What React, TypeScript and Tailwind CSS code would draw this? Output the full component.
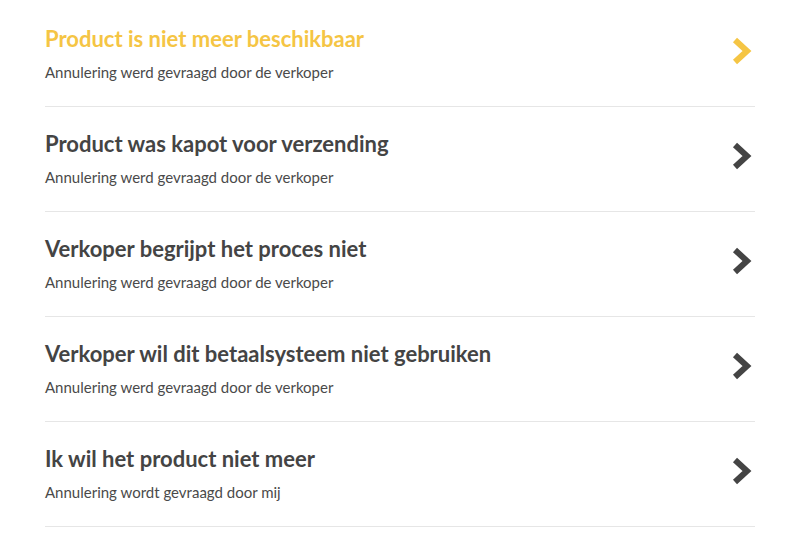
import React from 'react';

const reasons = [
  { title: 'Product is niet meer beschikbaar', sub: 'Annulering werd gevraagd door de verkoper', active: true },
  { title: 'Product was kapot voor verzending', sub: 'Annulering werd gevraagd door de verkoper' },
  { title: 'Verkoper begrijpt het proces niet', sub: 'Annulering werd gevraagd door de verkoper' },
  { title: 'Verkoper wil dit betaalsysteem niet gebruiken', sub: 'Annulering werd gevraagd door de verkoper' },
  { title: 'Ik wil het product niet meer', sub: 'Annulering wordt gevraagd door mij' },
];

const Chevron = ({ color }: { color: string }) => (
  <svg width="22" height="30" viewBox="0 0 22 30" fill="none">
    <polyline points="4,4 16,15 4,26" stroke={color} strokeWidth="6" strokeLinejoin="miter" />
  </svg>
);

export default function App() {
  return (
    <div className="w-[800px] h-[543px] bg-white px-[45px] pt-[2px] font-['Lato',sans-serif] overflow-hidden">
      {reasons.map((r) => (
        <div key={r.title} className="flex items-center justify-between h-[105px] border-b border-[#e6e6e6] cursor-pointer">
          <div className="flex flex-col self-start pt-[23px]">
            <div className={`text-[22px] leading-[28px] font-bold ${r.active ? 'text-[#f5c544]' : 'text-[#444444]'}`}>
              {r.title}
            </div>
            <div className="mt-[9px] text-[15px] leading-[20px] text-[#4a4a4a]">{r.sub}</div>
          </div>
          <div className="mr-[2px] mb-[6px]">
            <Chevron color={r.active ? '#f5c544' : '#444444'} />
          </div>
        </div>
      ))}
    </div>
  );
}
